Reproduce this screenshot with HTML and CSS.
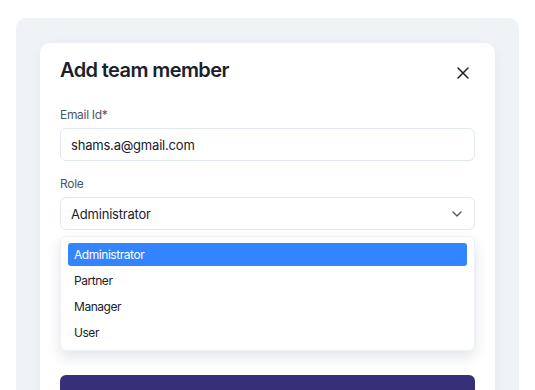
FILE: index.html
```html
<html>
<head>
<link rel="stylesheet" href="styles.css">
  <title>Add team member</title>
</head>
<body>
<div class="panel">
  <div class="modal">
    <div class="modal-head">
      <h2 class="modal-title">Add team member</h2>
      <button class="close-btn" type="button">
        <svg width="12" height="12" viewBox="0 0 12 12"><path d="M1 1 L11 11 M11 1 L1 11" stroke="#1a202c" stroke-width="1.5" stroke-linecap="round"/></svg>
      </button>
    </div>

    <div class="field">
      <label class="field-label">Email Id*</label>
      <div class="input">shams.a@gmail.com</div>
    </div>

    <div class="field">
      <label class="field-label">Role</label>
      <div class="input select">
        <span>Administrator</span>
        <svg width="10" height="6" viewBox="0 0 10 6"><path d="M1 1 L5 5 L9 1" fill="none" stroke="#4a5568" stroke-width="1.3" stroke-linecap="round" stroke-linejoin="round"/></svg>
      </div>
      <ul class="options">
        <li class="option selected">Administrator</li>
        <li class="option">Partner</li>
        <li class="option">Manager</li>
        <li class="option">User</li>
      </ul>
    </div>

    <button class="save-btn" type="button">Save</button>
  </div>
</div>
</body>
</html>
```

FILE: styles.css
```css
/* page */
* {box-sizing: border-box;}

body {
  margin: 0;
  background: #ffffff;
  font-family: Inter, "Noto Sans", sans-serif;
  color: #1a202c;
}

.panel {
  margin: 18px 0 0 16px;
  width: 503px;
  height: 400px;
  padding: 25px 24px 0;
  background-color: #eff2f7;
  border-radius: 10px;
}

/* modal card */
.modal {
  background: #ffffff;
  border-radius: 10px;
  padding: 13px 20px 20px;
  box-shadow: 0 4px 14px rgba(30, 40, 70, 0.05);
}

.modal-head {
  display: flex;
  justify-content: space-between;
  align-items: center;
  height: 28px;
}

.modal-title {
  margin: 0;
  font-size: 20px;
  line-height: 28px;
  font-weight: 600;
  letter-spacing: -0.6px;
  color: #1a202c;
}

.close-btn {
  border: none;
  background: none;
  padding: 0;
  width: 24px;
  height: 24px;
  margin-top: 5px;
  display: flex;
  align-items: center;
  justify-content: center;
}

/* form fields */
.field {
  margin-top: 23px;
}

.field + .field {
  margin-top: 15px;
}

.field-label {
  display: block;
  font-size: 12px;
  line-height: 16px;
  letter-spacing: -0.3px;
  color: #4a5568;
  margin-bottom: 5px;
}

.input {
  height: 33px;
  border: 1px solid #e2e8f0;
  border-radius: 6px;
  padding: 0 10px;
  font-size: 13px;
  letter-spacing: -0.2px;
  display: flex;
  align-items: center;
  color: #1a202c;
}

.select {
  justify-content: space-between;
  padding-right: 12px;
}

/* open dropdown list */
.options {
  list-style: none;
  margin: 6px 0 0;
  padding: 6px 7px 6px;
  border: 1px solid #edf0f4;
  border-radius: 6px;
  background: #ffffff;
  box-shadow: 0 6px 14px rgba(20, 30, 60, 0.12);
  display: flex;
  flex-direction: column;
  gap: 3px;
}

.option {
  height: 23px;
  line-height: 23px;
  padding: 0 6px;
  font-size: 12px;
  letter-spacing: -0.45px;
  color: #1a202c;
  border-radius: 3px;
}

.option.selected {
  background-color: #3385ff;
  color: #ffffff;
}

.save-btn {
  display: block;
  width: 100%;
  margin-top: 24px;
  height: 40px;
  border: none;
  border-radius: 6px;
  background-color: #372f78;
  color: #ffffff;
  font-family: Inter, "Noto Sans", sans-serif;
  font-size: 14px;
  font-weight: 600;
}
```
